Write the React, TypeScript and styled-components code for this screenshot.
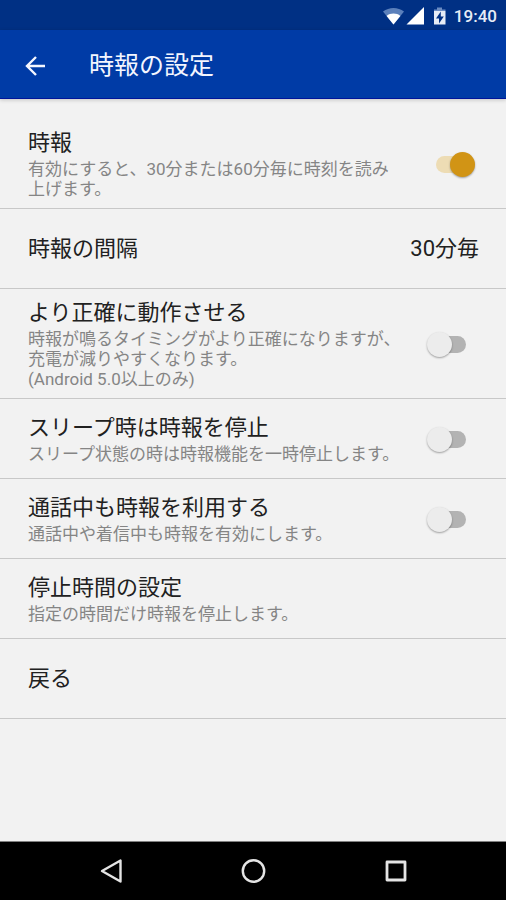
import React, { useState }           from 'react'
import styled, { createGlobalStyle } from 'styled-components'

const GlobalStyle = createGlobalStyle`
  * {
    box-sizing : border-box;
  }

  body {
    margin      : 0;
    background  : #f2f2f2;
    font-family : Roboto, "Noto Sans CJK JP", sans-serif;
  }

  button {
    border      : 0;
    padding     : 0;
    background  : none;
    font-family : inherit;
    cursor      : pointer;
  }

  svg {
    display : block;
  }
`
const Screen = styled.div`
  display        : flex;
  flex-direction : column;
  min-height     : 100vh;
`
const StatusBar = styled.div`
  display         : flex;
  align-items     : center;
  justify-content : flex-end;
  height          : 30px;
  padding         : 2px 9px 0 0;
  color           : #e6ecf6;
  background      : #003084;
`
const Clock = styled.time`
  margin-left : 6px;
  font-size   : 17px;
  font-weight : 500;
  line-height : 28px;
`
const AppBar = styled.header`
  display       : flex;
  align-items   : center;
  gap           : 39px;
  height        : 69px;
  padding       : 3px 22px 0;
  color         : #f4f6ff;
  background    : #003ba6;
  border-bottom : 1px solid #00149a;
  box-shadow    : 0 1px 4px rgba(0, 0, 0, 0.2);
`
const BackButton = styled.button`
  color : inherit;
`
const AppTitle = styled.h1`
  margin      : 0;
  font-size   : 25px;
  font-weight : 400;
  line-height : 36px;
`
const SettingsList = styled.main`
  flex        : 1;
  padding-top : 20px;
`
const Row = styled.div`
  display       : flex;
  align-items   : center;
  width         : 100%;
  min-height    : 80px;
  padding       : 10px 27px 9px 28px;
  color         : #212121;
  border-bottom : 1px solid #c8c8c8;
  text-align    : left;
`
const RowText = styled.div`
  flex : 1;
`
const Title = styled.label`
  display     : block;
  font-size   : 22px;
  line-height : 28px;
`
const Summary = styled.p`
  margin      : 2px 0 0;
  color       : #858585;
  font-size   : 17px;
  line-height : 20px;
  white-space : pre-line;
`
const Value = styled.span`
  font-size   : 22px;
  line-height : 28px;
`
const Toggle = styled.input`
  appearance    : none;
  position      : relative;
  flex          : none;
  width         : 30px;
  height        : 17px;
  margin        : 0 13px 0 34px;
  border-radius : 9px;
  background    : #b3b3b3;
  cursor        : pointer;

  &::before {
    content       : '';
    position      : absolute;
    top           : -4px;
    left          : -9px;
    width         : 25px;
    height        : 25px;
    border-radius : 50%;
    background    : #ececec;
    box-shadow    : 0 1px 2px rgba(0, 0, 0, 0.35);
  }

  &:checked {
    background : #eddcb4;
  }

  &:checked::before {
    left       : 14px;
    background : #d19415;
  }
`
const NavBar = styled.nav`
  display         : flex;
  align-items     : center;
  justify-content : center;
  height          : 59px;
  background      : #000;
  border-top      : 1px solid #808080;
`
const NavButton = styled.button`
  display         : flex;
  justify-content : center;
  width           : 28%;
  color           : #e4e4e4;
`

const StatusIcons = () => (
  <svg width="66" height="22" viewBox="0 0 66 22" aria-hidden="true">
    <path d="M1 6.5C7 1.8 16 1.8 22 6.5L11.5 19.5Z" fill="#5b80bb" />
    <path d="M4.6 11C8.5 7.8 14.5 7.8 18.4 11L11.5 19.5Z" fill="#fff" />
    <path d="M42 2V19.5H24.5Z" fill="#fff" />
    <path d="M52 6V4.5H55V2.5H60V4.5H63.5V6Z" fill="#6c8cc2" />
    <path
      fillRule="evenodd"
      d="M52 6H63.5V19.5H52ZM58.8 6.5L54 13.5H57V18.5L61.8 11.5H58.8Z"
      fill="#e6ecf6"
    />
  </svg>
)

const BackArrow = () => (
  <svg width="28" height="28" viewBox="0 0 28 28" fill="none" stroke="currentColor" strokeWidth="2.4">
    <path d="M23 14H5M14 5L5 14L14 23" />
  </svg>
)

interface SwitchRowProps {
  id: string
  title: string
  summary: string
  on?: boolean
}

const SwitchRow = ({ id, title, summary, on = false }: SwitchRowProps) => {
  const [checked, setChecked] = useState(on)

  return (
    <Row>
      <RowText>
        <Title htmlFor={ id }>{ title }</Title>
        <Summary id={ `${ id }-summary` }>{ summary }</Summary>
      </RowText>
      <Toggle
        id={ id }
        type="checkbox"
        role="switch"
        aria-describedby={ `${ id }-summary` }
        checked={ checked }
        onChange={ (e) => setChecked(e.target.checked) }
      />
    </Row>
  )
}

interface ActionRowProps {
  title: string
  summary?: string
  value?: string
}

const ActionRow = ({ title, summary, value }: ActionRowProps) => (
  <Row as="button">
    <RowText>
      <Title as="div">{ title }</Title>
      { summary && <Summary>{ summary }</Summary> }
    </RowText>
    { value && <Value>{ value }</Value> }
  </Row>
)

const App = () => (
  <Screen lang="ja">
    <GlobalStyle />
    <StatusBar>
      <StatusIcons />
      <Clock>19:40</Clock>
    </StatusBar>
    <AppBar>
      <BackButton aria-label="戻る"><BackArrow /></BackButton>
      <AppTitle>時報の設定</AppTitle>
    </AppBar>
    <SettingsList>
      <SwitchRow id="signal" title="時報" summary="有効にすると、30分または60分毎に時刻を読み上げます。" on />
      <ActionRow title="時報の間隔" value="30分毎" />
      <SwitchRow
        id="exact"
        title="より正確に動作させる"
        summary={ '時報が鳴るタイミングがより正確になりますが、\n充電が減りやすくなります。\n(Android 5.0以上のみ)' }
      />
      <SwitchRow id="sleep" title="スリープ時は時報を停止" summary="スリープ状態の時は時報機能を一時停止します。" />
      <SwitchRow id="call" title="通話中も時報を利用する" summary="通話中や着信中も時報を有効にします。" />
      <ActionRow title="停止時間の設定" summary="指定の時間だけ時報を停止します。" />
      <ActionRow title="戻る" />
    </SettingsList>
    <NavBar>
      <NavButton aria-label="戻る">
        <svg width="26" height="26" viewBox="0 0 26 26" fill="none" stroke="currentColor" strokeWidth="2.4" strokeLinejoin="round">
          <path d="M22.5 2.5V23.5L4 13Z" />
        </svg>
      </NavButton>
      <NavButton aria-label="ホーム">
        <svg width="26" height="26" viewBox="0 0 26 26" fill="none" stroke="currentColor" strokeWidth="2.4">
          <circle cx="13.5" cy="13" r="10.7" />
        </svg>
      </NavButton>
      <NavButton aria-label="アプリ履歴">
        <svg width="26" height="26" viewBox="0 0 26 26" fill="none" stroke="currentColor" strokeWidth="2.8" strokeLinejoin="round">
          <rect x="5" y="4" width="18" height="18" />
        </svg>
      </NavButton>
    </NavBar>
  </Screen>
)

export default App
